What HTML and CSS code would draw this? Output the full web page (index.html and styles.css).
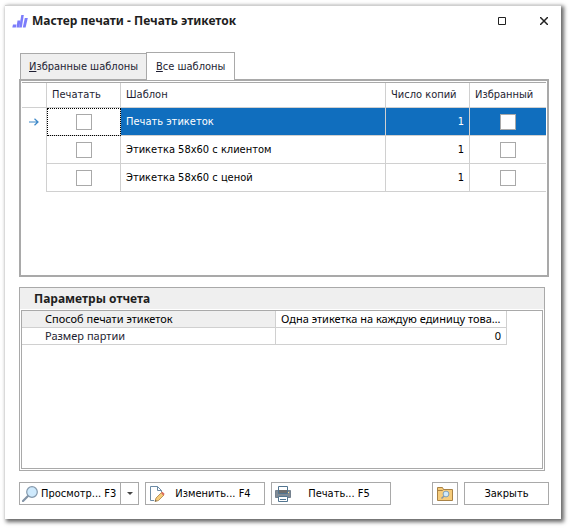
FILE: index.html
```html
<!DOCTYPE html>
<html lang="ru">
<head>
<meta charset="utf-8">
<title>Мастер печати - Печать этикеток</title>
<link rel="stylesheet" href="styles.css">
</head>
<body>
<main class="window">
  <header class="titlebar">
    <svg class="logo" width="16" height="13" viewBox="0 0 16 13" aria-hidden="true">
      <g fill="#7b7cfb"><path d="M1 9.500h3.500l-.7 3H.3z"/><path d="M5.500 5.500h3L7.300 12.500H4.500z"/><path d="M9.300 0h2.500L9.800 12.500H7.200z"/><path d="M12.800 3h3l-2.200 9.500h-2.800z"/></g>
    </svg>
    <h1>Мастер печати - Печать этикеток</h1>
    <button class="winbtn" type="button" aria-label="Развернуть"><svg width="8" height="8" viewBox="0 0 8 8"><path d="M.5.5h7v7h-7z" fill="none" stroke="#222"/></svg></button>
    <button class="winbtn" type="button" aria-label="Закрыть окно"><svg width="8" height="8" viewBox="0 0 8 8"><path d="M0 0l8 8M8 0L0 8" fill="none" stroke="#222" stroke-width="1.500"/></svg></button>
  </header>

  <div class="content">
    <div class="tabs" role="tablist">
      <button class="tab" type="button" role="tab" aria-selected="false"><span><u>И</u>збранные шаблоны</span></button>
      <button class="tab active" type="button" role="tab" aria-selected="true"><span><u>В</u>се шаблоны</span></button>
    </div>
    <section class="panel" role="tabpanel">
      <table class="templates">
        <colgroup><col class="c-mark"><col class="c-print"><col><col class="c-copies"><col class="c-fav"></colgroup>
        <thead><tr><th></th><th>Печатать</th><th>Шаблон</th><th>Число копий</th><th>Избранный</th></tr></thead>
        <tbody>
          <tr class="selected">
            <td class="mark"><svg width="10" height="8" viewBox="0 0 10 8"><path d="M0 4h9M5.500.8L9 4 5.500 7.200" fill="none" stroke="#3c87c7" stroke-width="1.200"/></svg></td>
            <td class="check focused"><input type="checkbox" aria-label="Печатать: Печать этикеток"></td>
            <td>Печать этикеток</td><td class="num">1</td>
            <td class="check"><input type="checkbox" aria-label="Избранный: Печать этикеток"></td>
          </tr>
          <tr>
            <td class="mark"></td>
            <td class="check"><input type="checkbox" aria-label="Печатать: Этикетка 58x60 с клиентом"></td>
            <td>Этикетка 58x60 с клиентом</td><td class="num">1</td>
            <td class="check"><input type="checkbox" aria-label="Избранный: Этикетка 58x60 с клиентом"></td>
          </tr>
          <tr>
            <td class="mark"></td>
            <td class="check"><input type="checkbox" aria-label="Печатать: Этикетка 58x60 с ценой"></td>
            <td>Этикетка 58x60 с ценой</td><td class="num">1</td>
            <td class="check"><input type="checkbox" aria-label="Избранный: Этикетка 58x60 с ценой"></td>
          </tr>
        </tbody>
      </table>
    </section>

    <section class="group">
      <h2>Параметры отчета</h2>
      <div class="params">
        <table>
          <tbody>
            <tr class="current"><th scope="row">Способ печати этикеток</th><td>Одна этикетка на каждую единицу товара</td></tr>
            <tr><th scope="row">Размер партии</th><td class="num">0</td></tr>
          </tbody>
        </table>
      </div>
    </section>

    <footer class="actions">
      <div class="split">
        <button class="main" type="button">
          <svg width="16" height="16" viewBox="0 0 16 16"><path d="M1 15l5-5" stroke="#8394a6" stroke-width="2.200" stroke-linecap="round"/><circle cx="10" cy="6" r="5.300" fill="#cfeafd" stroke="#8499ad" stroke-width="1.200"/></svg>
          <span>Просмотр... F3</span>
        </button>
        <button class="drop" type="button" aria-label="Другие варианты просмотра"><svg width="6" height="3" viewBox="0 0 6 3"><path d="M0 0h6L3 3z" fill="#444"/></svg></button>
      </div>
      <button class="btn" type="button">
        <svg width="16" height="16" viewBox="0 0 16 16"><path d="M5 14.500H1.500V.5h7l4 4V6M8.500.5v4h4" fill="#fff" stroke="#6c8ba6"/><path d="M6 15.500l1-3.500 5.500-5.500 2.500 2.500L9.500 14.500z" fill="#f6cc7b" stroke="#a98245" stroke-width=".8"/><path d="M12 7l1.500-1.300L15.700 8l-1.400 1.400z" fill="#d9695c"/><path d="M6 15.500l.5-1.700 1.200 1.200z" fill="#555"/></svg>
        <span>Изменить... F4</span>
      </button>
      <button class="btn" type="button">
        <svg width="16" height="16" viewBox="0 0 16 16"><path d="M.5 4.500h15v7H.5z" fill="#808a94" stroke="#74818e"/><path d="M3.500.5h9v7h-9z" fill="none" stroke="#527590"/><path d="M4 4h8v3H4z" fill="#6d6d6d"/><path d="M13 6h1v1h-1z" fill="#ffe18a"/><path d="M3.500 10.500h9v5h-9z" fill="#fff" stroke="#527590"/><path d="M5 13.500h6" stroke="#527590"/></svg>
        <span>Печать... F5</span>
      </button>
      <button class="btn folder" type="button" aria-label="Открыть папку шаблонов">
        <svg width="16" height="14" viewBox="0 0 16 14"><path d="M.5 13.500V.5h5l1 2h9v11z" fill="#f6cc7b" stroke="#a98245"/><path d="M.5 3.500h5l1-1" fill="none" stroke="#a98245"/><path d="M4.500 11.500l2.500-2.500" stroke="#8394a6" stroke-width="1.500"/><circle cx="9" cy="7" r="2.900" fill="#cfeafd" stroke="#7f9fb6"/></svg>
      </button>
      <button class="btn close" type="button"><span>Закрыть</span></button>
    </footer>
  </div>
</main>
</body>
</html>
```

FILE: styles.css
```css
* {
  box-sizing: border-box;
}

body {
  margin: 0;
  min-height: 100vh;
  display: flex;
  padding: 5px 9px 9px 5px;
  background: #fff;
  color: #1e1e1e;
  font: 11px/14px "DejaVu Sans Condensed", Tahoma, sans-serif;
}

button {
  font: inherit;
  color: #000;
  padding: 0;
  border: 0;
  background: #fff;
}

svg {
  flex: none;
  display: block;
}

.window {
  flex: 1;
  min-width: 0;
  display: flex;
  flex-direction: column;
  background: #fff;
  border-top: 1px solid #d0d0d0;
  box-shadow: 2px 2px 4px 1px rgba(0, 0, 0, 0.6);
}

.titlebar {
  display: flex;
  align-items: center;
  height: 30px;
  padding: 0 11px 0 7px;
}

h1,
h2 {
  font-family: "Noto Sans", Tahoma, sans-serif;
  font-size: 12px;
}

h1 {
  flex: 1;
  margin: 0 0 0 4px;
}

.winbtn {
  width: 12px;
  height: 20px;
  margin-left: 30px;
  display: flex;
  align-items: center;
  justify-content: center;
}

.content {
  flex: 1;
  display: flex;
  flex-direction: column;
  padding: 16px 12px 14px 14px;
}

.tabs {
  display: flex;
  align-items: flex-end;
  padding-left: 1px;
}

.tab {
  height: 26px;
  padding: 0 8px;
  border: 1px solid #a9a9a9;
  border-width: 1px 0 0 1px;
  background: #efefef;
  color: #1e1e32;
}

.tab.active {
  height: 28px;
  padding: 0 9px;
  margin-bottom: -1px;
  border-right-width: 1px;
  background: #fff;
  z-index: 1;
}

.panel {
  flex: 197;
  border: 2px solid #a9a9a9;
  padding: 1px 1px 0;
}

table {
  width: 100%;
  table-layout: fixed;
  border-spacing: 0;
}

th,
td {
  padding: 0 5px;
  text-align: left;
  font-weight: normal;
  white-space: nowrap;
  overflow: hidden;
  text-overflow: ellipsis;
  border: 0 solid #d0d0d0;
}

.num {
  text-align: right;
}

.templates {
  border-top: 1px solid #a9a9a9;
}

.templates th,
.templates td {
  border-width: 0 1px 1px 0;
}

.templates th {
  height: 25px;
  color: #1e1e32;
}

.templates td {
  height: 28px;
  color: #000;
}

.templates th:last-child,
.templates td:last-child {
  border-right-width: 0;
}

.c-mark { width: 25px; }
.c-print { width: 74px; }
.c-copies { width: 84px; }
.c-fav { width: 76px; }

.templates .mark {
  padding: 0 0 0 7px;
  border-bottom-width: 0;
}

.templates .selected td {
  background: #106ebe;
  color: #fff;
}

.templates .selected .mark,
.templates .selected .focused {
  background: #fff;
}

.focused {
  outline: 1px dotted #000;
  outline-offset: -1px;
}

.check {
  text-align: center;
}

.check input {
  appearance: none;
  display: block;
  width: 16px;
  height: 16px;
  margin: 0 auto;
  border: 1px solid #a9a9a9;
  background: #fff;
}

.group {
  flex: 184;
  display: flex;
  flex-direction: column;
  margin: 10px 4px 0 0;
  padding: 0 1px 1px;
  border: 1px solid #a9a9a9;
}

h2 {
  margin: 0 -1px 1px;
  padding: 0 14px;
  background: #efefef;
  line-height: 21px;
}

.params {
  flex: 1;
  border: 1px solid #a9a9a9;
  padding-right: 35px;
  font-family: "Noto Sans", Tahoma, sans-serif;
}

.params th,
.params td {
  height: 17px;
  border-width: 0 1px 1px 0;
}

.params th {
  width: 254px;
  padding-left: 23px;
  color: #1e1e32;
}

.params td {
  color: #000;
}

.params .current th {
  background: #efefef;
  color: #000;
}

.actions {
  display: flex;
  gap: 6px;
  margin-top: 11px;
}

.btn,
.split {
  display: flex;
  align-items: center;
  width: 120px;
  height: 23px;
  padding: 0 3px;
  border: 1px solid #a9a9a9;
}

.btn span {
  flex: 1;
}

.split {
  padding: 0;
}

.main {
  flex: 1;
  display: flex;
  align-items: center;
  gap: 3px;
  padding-left: 2px;
  white-space: nowrap;
}

.drop {
  width: 18px;
  height: 21px;
  display: flex;
  align-items: center;
  justify-content: center;
  border-left: 1px solid #a9a9a9;
}

.folder {
  width: 26px;
  padding: 0;
  justify-content: center;
  margin-left: auto;
}

.close {
  width: 85px;
}
```
